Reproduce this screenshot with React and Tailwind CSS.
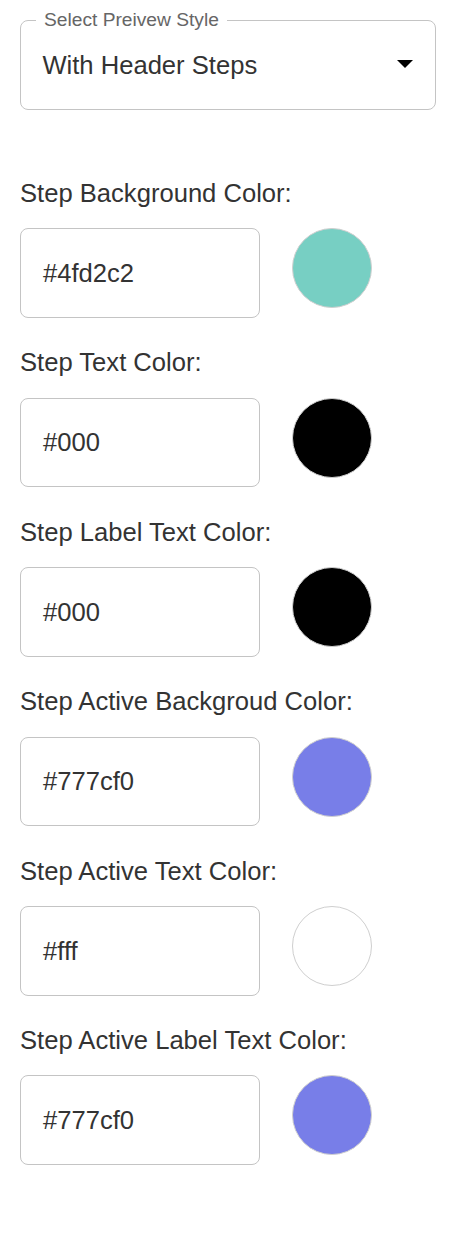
import { useState } from 'react';

const fields = [
  { label: 'Step Background Color:', value: '#4fd2c2', swatch: '#77cfc3' },
  { label: 'Step Text Color:', value: '#000', swatch: '#000000' },
  { label: 'Step Label Text Color:', value: '#000', swatch: '#000000' },
  { label: 'Step Active Backgroud Color:', value: '#777cf0', swatch: '#787ee8' },
  { label: 'Step Active Text Color:', value: '#fff', swatch: '#ffffff' },
  { label: 'Step Active Label Text Color:', value: '#777cf0', swatch: '#787ee8' },
];

const ColorField = ({ field, first }) => (
  <div className={first ? '' : 'mt-[25.4px]'}>
    <p className="text-[25.6px] leading-[38.4px] text-[#333]">{field.label}</p>
    <div className="mt-4 flex items-start gap-8">
      <div className="flex h-[89.6px] w-[240px] items-center rounded-[8px] border border-[#c4c4c4] px-[22px] text-[25.6px] text-[#333]">
        {field.value}
      </div>
      <div
        className="h-[80px] w-[80px] rounded-full border border-[#cfcfcf]"
        style={{ backgroundColor: field.swatch }}
      />
    </div>
  </div>
);

export default function App() {
  const [style] = useState('With Header Steps');

  return (
    <div className="min-h-[1236px] bg-white pl-5 pr-[30px] pt-5 font-['Liberation_Sans',Arial,sans-serif]">
      <div className="relative flex h-[89.6px] items-center justify-between pl-[22.4px] pr-[22px]">
        <fieldset className="pointer-events-none absolute inset-x-0 bottom-0 top-[-11px] m-0 rounded-[8px] border border-[#c4c4c4] pl-[15px]">
          <legend className="px-2 text-[19.2px] leading-[22px] text-[#666]">Select Preivew Style</legend>
        </fieldset>
        <span className="text-[25.6px] text-[#333]">{style}</span>
        <svg width="16" height="8" viewBox="0 0 10 5" className="mr-[1px] mt-[-2px]">
          <path d="M0 0l5 5 5-5z" fill="#000" />
        </svg>
      </div>

      <div className="mt-[64.4px]">
        {fields.map((f, i) => (
          <ColorField key={i} field={f} first={i === 0} />
        ))}
      </div>
    </div>
  );
}
